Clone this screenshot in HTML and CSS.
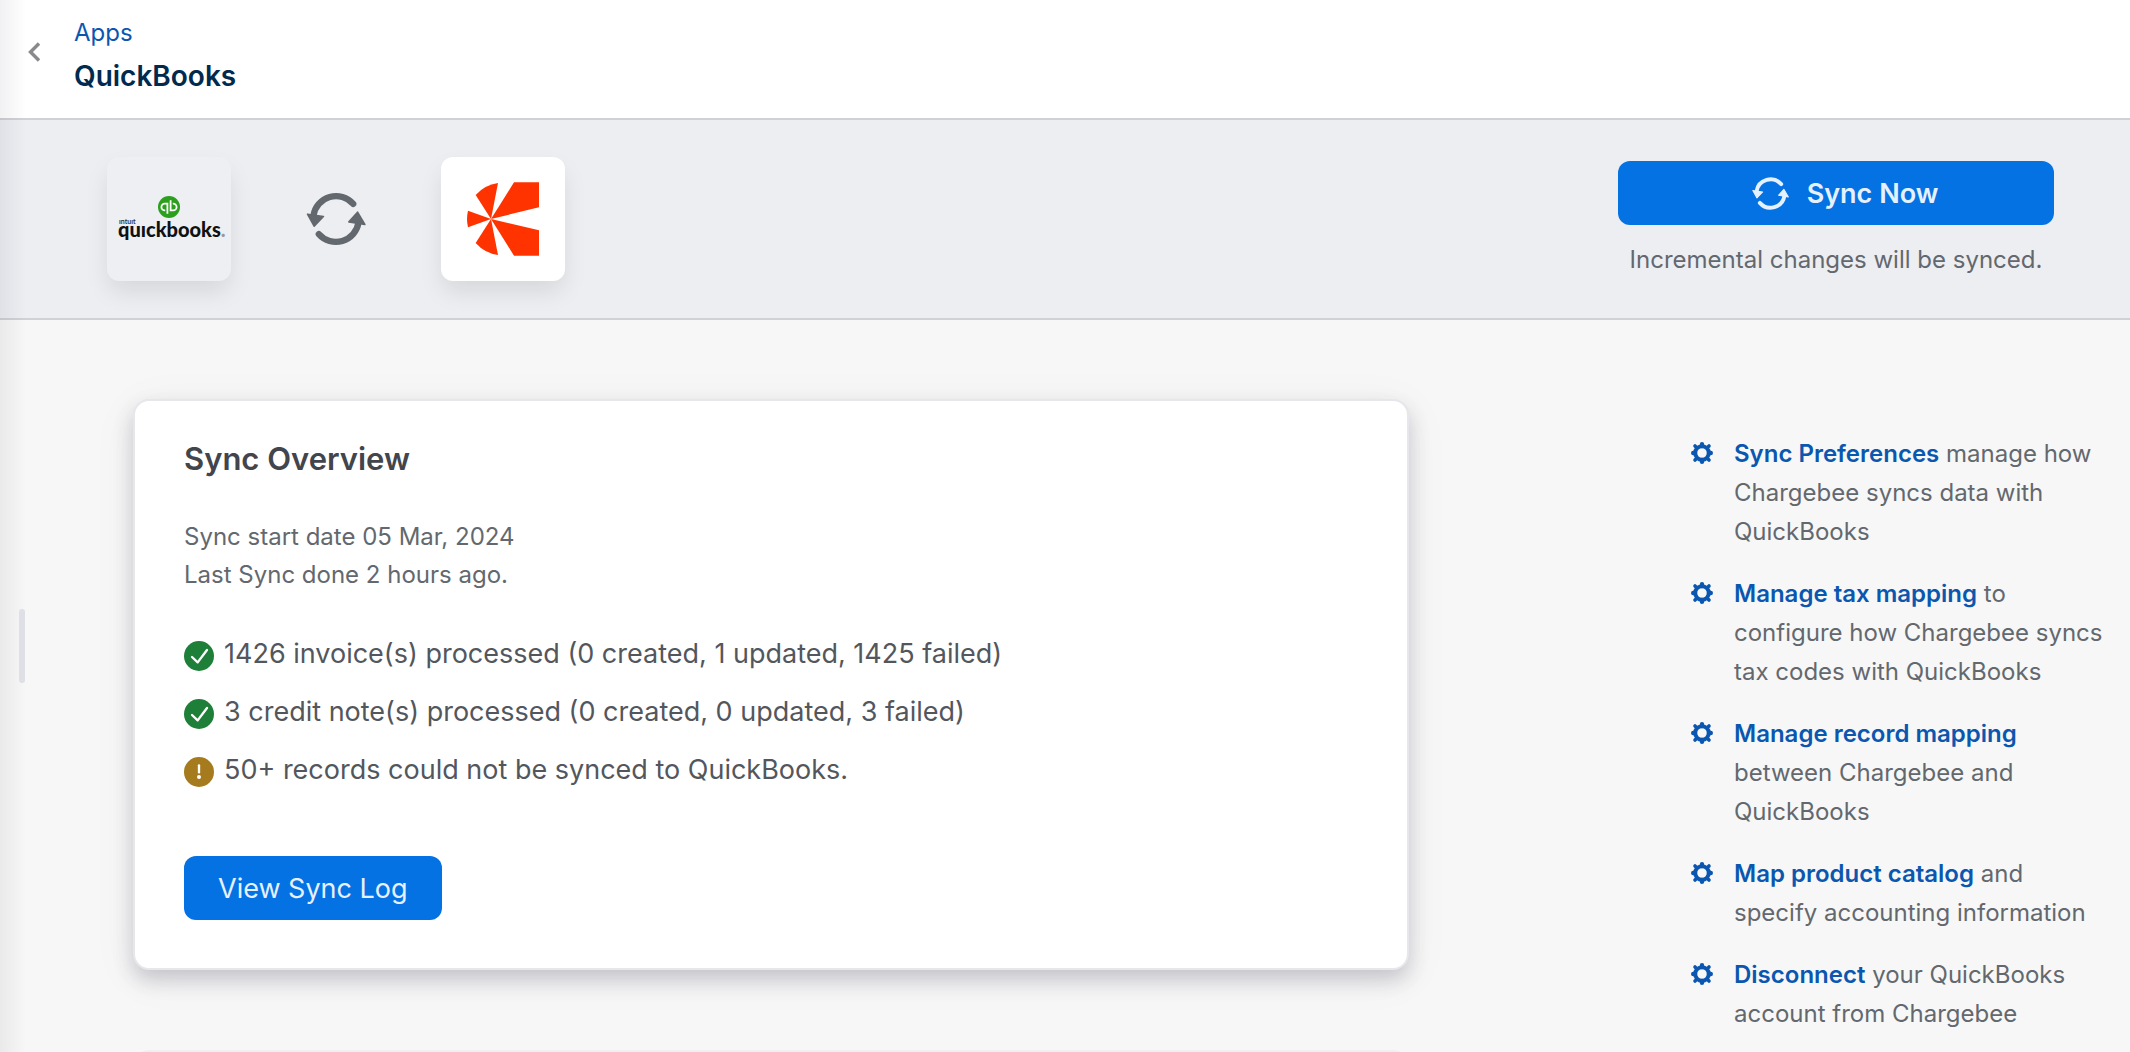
FILE: index.html
```html
<!DOCTYPE html>
<html lang="en">
<head>
    <meta charset="UTF-8">
    <meta name="viewport" content="width=device-width, initial-scale=1.0">
    <title>QuickBooks</title>
    <link rel="stylesheet" href="styles.css">
</head>
<body>
    <!-- shared icons -->
    <svg class="sprite" aria-hidden="true">
        <symbol id="icon-sync" viewBox="0 0 180 157">
            <g fill="none" stroke="currentColor" stroke-width="19" stroke-linecap="round">
                <path d="M142 33A69 69 0 0 0 22 68"/>
                <path d="M38 124A69 69 0 0 0 158 89"/>
            </g>
            <g fill="currentColor" stroke="currentColor" stroke-width="5" stroke-linejoin="round">
                <path d="M4 64L52 71L24 100Z"/>
                <path d="M155 58L177 95L129 87Z"/>
            </g>
        </symbol>
        <symbol id="icon-gear" viewBox="-11 -11 22 22">
            <circle r="6.8" fill="none" stroke="currentColor" stroke-width="4"/>
            <g stroke="currentColor" stroke-width="4.4" stroke-linecap="round">
                <path d="M0 -8.8V-7M0 8.8V7M-8.8 0H-7M8.8 0H7"/>
                <path stroke-width="3.6" d="M-7 -7L-6 -6M7 -7L6 -6M-7 7L-6 6M7 7L6 6"/>
            </g>
        </symbol>
        <symbol id="icon-check" viewBox="0 0 90 90">
            <circle cx="45" cy="45" r="45" fill="#1e7f38"/>
            <path d="M24 48L41 64L69 27" fill="none" stroke="#fff" stroke-width="7" stroke-linecap="round" stroke-linejoin="round"/>
        </symbol>
        <symbol id="icon-warn" viewBox="0 0 90 90">
            <circle cx="45" cy="45" r="45" fill="#a67b1e"/>
            <path d="M45 25V46" stroke="#fff" stroke-width="7" stroke-linecap="round"/>
            <circle cx="45" cy="60" r="6" fill="#fff"/>
        </symbol>
    </svg>

    <div class="app">
        <header class="header">
            <button class="back" aria-label="Back">
                <svg width="12" height="20" viewBox="0 0 12 20"><path d="M11 1.5L2.5 10L11 18.5" fill="none" stroke="#8a8a8d" stroke-width="3.4"/></svg>
            </button>
            <div class="header-text">
                <a href="#" class="crumb">Apps</a>
                <h1 class="page-title">QuickBooks</h1>
            </div>
        </header>

        <div class="banner">
            <div class="pair">
                <div class="tile tile-plain">
                    <svg width="124" height="124" viewBox="0 0 124 124" role="img" aria-label="Intuit QuickBooks">
                        <circle cx="62" cy="50" r="11" fill="#2ca01c"/>
                        <g fill="none" stroke="#fff" stroke-width="1.8">
                            <path d="M60.4 46.6H57.8A3.4 3.4 0 0 0 57.8 53.4H58.2M60.4 45.7V56.8"/>
                            <path d="M63.6 53.4H66.2A3.4 3.4 0 0 0 66.2 46.6H65.8M63.6 54.3V43.2"/>
                        </g>
                        <text x="12" y="67" class="qb-small">ıntuıt</text>
                        <text x="11" y="80" class="qb-word">quıckbooks<tspan class="qb-dot">.</tspan></text>
                    </svg>
                </div>
                <svg class="pair-sync" width="60" height="52"><use href="#icon-sync"/></svg>
                <div class="tile">
                    <svg width="72" height="74" viewBox="0 0 216 220" fill="#ff3300" role="img" aria-label="Chargebee">
                        <path d="M72 110L141 0H216V75Z"/>
                        <path d="M72 110L216 144V220H141Z"/>
                        <path d="M72 110L93 2A110 110 0 0 0 26 38Z"/>
                        <path d="M72 110L93 218A110 110 0 0 1 26 182Z"/>
                        <path d="M72 110L3 85A110 110 0 0 0 3 135Z"/>
                    </svg>
                </div>
            </div>
            <div class="sync-action">
                <button class="btn btn-sync">
                    <svg width="37" height="33"><use href="#icon-sync"/></svg>
                    Sync Now
                </button>
                <p class="sync-note">Incremental changes will be synced.</p>
            </div>
        </div>

        <main class="content">
            <div class="cards">
                <section class="card">
                    <h2 class="card-title">Sync Overview</h2>
                    <p class="sync-dates">Sync start date 05 Mar, 2024<br>Last Sync done 2 hours ago.</p>
                    <ul class="results">
                        <li><svg width="30" height="30"><use href="#icon-check"/></svg><span>1426 invoice(s) processed (0 created, 1 updated, 1425 failed)</span></li>
                        <li><svg width="30" height="30"><use href="#icon-check"/></svg><span>3 credit note(s) processed (0 created, 0 updated, 3 failed)</span></li>
                        <li><svg width="30" height="30"><use href="#icon-warn"/></svg><span>50+ records could not be synced to QuickBooks.</span></li>
                    </ul>
                    <button class="btn">View Sync Log</button>
                </section>
                <section class="card-next"></section>
            </div>

            <aside class="actions">
                <ul class="action-list">
                    <li><svg width="22" height="22"><use href="#icon-gear"/></svg><p><a href="#">Sync Preferences</a> manage how Chargebee syncs data with QuickBooks</p></li>
                    <li><svg width="22" height="22"><use href="#icon-gear"/></svg><p><a href="#">Manage tax mapping</a> to configure how Chargebee syncs tax codes with QuickBooks</p></li>
                    <li><svg width="22" height="22"><use href="#icon-gear"/></svg><p><a href="#">Manage record mapping</a> between Chargebee and QuickBooks</p></li>
                    <li><svg width="22" height="22"><use href="#icon-gear"/></svg><p><a href="#">Map product catalog</a> and specify accounting information</p></li>
                    <li><svg width="22" height="22"><use href="#icon-gear"/></svg><p><a href="#">Disconnect</a> your QuickBooks account from Chargebee</p></li>
                </ul>
            </aside>
        </main>

        <!-- edge of the collapsed side menu -->
        <div class="edge"><span class="edge-handle"></span></div>
    </div>
</body>
</html>
```

FILE: styles.css
```css
* {
    box-sizing: border-box;
}

body {
    margin: 0;
    font-family: Inter, "Liberation Sans", sans-serif;
    font-size: 24px;
    line-height: 39px;
    color: #63686e;
    background-color: #f7f7f7;
}

h1, h2, p, ul {
    margin: 0;
    padding: 0;
}

ul {
    list-style: none;
}

a {
    color: #0b57b0;
    text-decoration: none;
}

svg {
    display: block;
    flex-shrink: 0;
}

.sprite {
    position: absolute;
    width: 0;
    height: 0;
}

.app {
    position: relative;
    display: flex;
    flex-direction: column;
    height: 100vh;
    overflow: hidden;
}

/* header */
.header {
    display: flex;
    align-items: center;
    gap: 34px;
    padding: 12px 28px 20px;
    background-color: #fff;
    border-bottom: 2px solid #d0d1d4;
}

.back {
    padding: 0 0 6px;
    border: none;
    background: none;
    cursor: pointer;
}

.header-text {
    display: flex;
    flex-direction: column;
}

.crumb {
    line-height: 42px;
}

.page-title {
    font-size: 28px;
    font-weight: 600;
    line-height: 44px;
    color: #012a4e;
}

/* banner */
.banner {
    display: flex;
    justify-content: space-between;
    align-items: flex-start;
    padding: 37px 76px 37px 107px;
    background-color: #edeef2;
    border-bottom: 2px solid #d0d1d4;
}

.pair {
    display: flex;
    align-items: center;
    gap: 75px;
}

.pair-sync {
    color: #63686e;
}

.tile {
    display: flex;
    align-items: center;
    justify-content: center;
    width: 124px;
    height: 124px;
    border-radius: 12px;
    background-color: #fff;
    box-shadow: 0 12px 24px -2px rgba(0, 0, 0, 0.1);
}

.tile-plain {
    background-color: #eeeff3;
}

.qb-word {
    font: 900 20px Lato, sans-serif;
    fill: #111;
}

.qb-small {
    font: 700 7px Lato, sans-serif;
    fill: #333;
}

.qb-dot {
    fill: #999;
}

.sync-action {
    width: 436px;
    padding-top: 4px;
    text-align: center;
}

.sync-note {
    margin-top: 15px;
}

.btn {
    height: 64px;
    padding: 0 34px;
    border: none;
    border-radius: 12px;
    background-color: #0572e3;
    color: #e6f1ff;
    font-family: inherit;
    font-size: 27px;
    cursor: pointer;
}

.btn-sync {
    display: flex;
    align-items: center;
    justify-content: center;
    gap: 18px;
    width: 100%;
    padding: 0 16px 0 34px;
    font-weight: 600;
}

/* content */
.content {
    display: flex;
    gap: 282px;
    padding: 79px 24px 0 133px;
}

.cards {
    flex: 1;
    display: flex;
    flex-direction: column;
    gap: 80px;
}

.card {
    padding: 38px 49px 48px;
    border: 2px solid #e6e6eb;
    border-radius: 16px;
    background-color: #fff;
    box-shadow: 0 10px 20px rgba(50, 45, 75, 0.22), 0 8px 48px rgba(0, 0, 0, 0.05);
}

.card-title {
    font-size: 31px;
    font-weight: 600;
    line-height: 40px;
    color: #42454c;
}

.sync-dates {
    margin-top: 39px;
    line-height: 38px;
}

.results {
    display: flex;
    flex-direction: column;
    gap: 18px;
    margin: 40px 0 66px;
    font-size: 27px;
    line-height: 40px;
    color: #53575d;
}

.results li {
    display: flex;
    align-items: flex-start;
    gap: 10px;
}

.results svg {
    margin-top: 7px;
}

.card-next {
    height: 300px;
    border: 2px solid #efefef;
    border-radius: 16px;
    background-color: #fff;
}

.actions {
    width: 415px;
    padding-top: 35px;
}

.action-list {
    display: flex;
    flex-direction: column;
    gap: 23px;
}

.action-list li {
    display: flex;
    gap: 21px;
    color: #0b57b0;
}

.action-list svg {
    margin-top: 8px;
}

.action-list p {
    color: #63686e;
}

.action-list a {
    font-weight: 600;
}

/* shadow of the side menu, over the page */
.edge {
    position: absolute;
    top: 0;
    bottom: 0;
    left: 0;
    width: 26px;
    background: linear-gradient(to right, rgba(20, 20, 50, 0.06), rgba(20, 20, 50, 0));
    pointer-events: none;
}

.edge-handle {
    position: absolute;
    top: 609px;
    left: 19px;
    width: 6px;
    height: 74px;
    border-radius: 3px;
    background-color: #dfe0e5;
}
```
